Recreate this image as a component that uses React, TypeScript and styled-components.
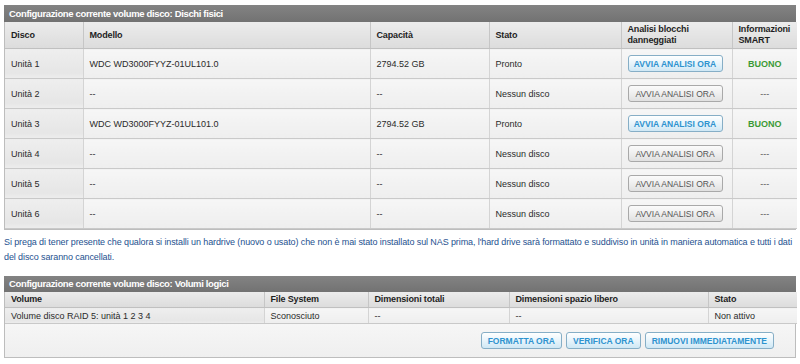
import styled, { createGlobalStyle, css } from "styled-components";

const Global = createGlobalStyle`
  html, body {
    margin: 0;
    padding: 0;
    background: #ffffff;
  }
  body {
    font-family: "Liberation Sans", Arial, sans-serif;
    font-size: 9px;
    color: #222;
  }
`;

const Page = styled.div`
  padding: 5px 4px 0 4px;
  width: 792px;
`;

const Panel = styled.div`
  border: 1px solid #bdbdbd;
  border-top: none;
`;

const PanelTitle = styled.div<{ $h: number }>`
  height: ${(p) => p.$h}px;
  line-height: ${(p) => p.$h}px;
  background: linear-gradient(#838383, #727272);
  color: #fff;
  font-weight: bold;
  font-size: 9.5px;
  letter-spacing: -0.35px;
  padding-left: 5px;
  margin: 0 -1px;
`;

const Table = styled.table`
  width: 100%;
  border-collapse: collapse;
  table-layout: fixed;
`;

const HeadCell = styled.th<{ $h: number }>`
  height: ${(p) => p.$h}px;
  padding: 0 4px 0 6px;
  text-align: left;
  font-weight: bold;
  font-size: 9px;
  letter-spacing: -0.15px;
  color: #1e1e1e;
  line-height: 11px;
  background: linear-gradient(#ececec, #dcdcdc);
  border-left: 1px solid #c6c6c6;
  border-bottom: 1px solid #c0c0c0;
  &:first-child {
    border-left: none;
  }
`;

const Cell = styled.td<{ $h: number; $center?: boolean }>`
  height: ${(p) => p.$h}px;
  padding: 0 6px;
  color: #2a2a2a;
  font-size: 9px;
  text-align: ${(p) => (p.$center ? "center" : "left")};
  background: linear-gradient(#f6f6f6, #eeeeee);
  border-left: 1px solid #d4d4d4;
  border-bottom: 1px solid #c9c9c9;
  white-space: nowrap;
  &:first-child {
    border-left: none;
    background: linear-gradient(#eeeeee, #e6e6e6 80%, #ededed);
  }
`;

const Good = styled.span`
  color: #3c9a36;
  font-weight: bold;
`;

const Dash = styled.span`
  color: #555;
`;

const ActionButton = styled.button<{ $active?: boolean }>`
  font-family: "Liberation Sans", Arial, sans-serif;
  font-size: 8.5px;
  font-weight: ${(p) => (p.$active ? "bold" : "normal")};
  height: 17px;
  padding: 0 6px;
  border-radius: 3px;
  cursor: pointer;
  white-space: nowrap;
  ${(p) =>
    p.$active
      ? css`
          color: #2e93cf;
          border: 1px solid #86aec6;
          background: linear-gradient(#ffffff, #e8f4fb 50%, #cfe8f5);
        `
      : css`
          color: #555;
          border: 1px solid #a9a9a9;
          background: linear-gradient(#fbfbfb, #ececec 60%, #e0e0e0);
        `}
`;

const ScanButton = styled(ActionButton)`
  width: 95px;
  padding: 0;
`;

const Notice = styled.p`
  margin: 5px 0 0 0;
  color: #25518f;
  line-height: 15px;
  font-size: 9px;
  letter-spacing: -0.1px;
`;

const LogicalPanel = styled(Panel)`
  margin-top: 11px;
`;

const ButtonBar = styled.div`
  height: 33px;
  display: flex;
  justify-content: flex-end;
  align-items: center;
  gap: 4px;
  padding-right: 21px;
  background: linear-gradient(#f6f6f6, #efefef);
`;

type Disk = {
  name: string;
  model: string;
  capacity: string;
  state: string;
  present: boolean;
};

const disks: Disk[] = [
  { name: "Unità 1", model: "WDC WD3000FYYZ-01UL101.0", capacity: "2794.52 GB", state: "Pronto", present: true },
  { name: "Unità 2", model: "--", capacity: "--", state: "Nessun disco", present: false },
  { name: "Unità 3", model: "WDC WD3000FYYZ-01UL101.0", capacity: "2794.52 GB", state: "Pronto", present: true },
  { name: "Unità 4", model: "--", capacity: "--", state: "Nessun disco", present: false },
  { name: "Unità 5", model: "--", capacity: "--", state: "Nessun disco", present: false },
  { name: "Unità 6", model: "--", capacity: "--", state: "Nessun disco", present: false },
];

const diskCols = [78, 287, 119, 132, 111, 65];
const volCols = [259, 104, 141, 199, 89];

const App = () => {
  return (
    <Page>
      <Global />
      <Panel>
        <PanelTitle $h={17}>Configurazione corrente volume disco: Dischi fisici</PanelTitle>
        <Table>
          <colgroup>
            {diskCols.map((w, i) => (
              <col key={i} style={{ width: w }} />
            ))}
          </colgroup>
          <thead>
            <tr>
              <HeadCell $h={26}>Disco</HeadCell>
              <HeadCell $h={26}>Modello</HeadCell>
              <HeadCell $h={26}>Capacità</HeadCell>
              <HeadCell $h={26}>Stato</HeadCell>
              <HeadCell $h={26}>
                Analisi blocchi
                <br />
                danneggiati
              </HeadCell>
              <HeadCell $h={26}>
                Informazioni
                <br />
                SMART
              </HeadCell>
            </tr>
          </thead>
          <tbody>
            {disks.map((d) => (
              <tr key={d.name}>
                <Cell $h={29}>{d.name}</Cell>
                <Cell $h={29}>{d.model}</Cell>
                <Cell $h={29}>{d.capacity}</Cell>
                <Cell $h={29}>{d.state}</Cell>
                <Cell $h={29}>
                  <ScanButton $active={d.present}>AVVIA ANALISI ORA</ScanButton>
                </Cell>
                <Cell $h={29} $center>
                  {d.present ? <Good>BUONO</Good> : <Dash>---</Dash>}
                </Cell>
              </tr>
            ))}
          </tbody>
        </Table>
      </Panel>

      <Notice>
        Si prega di tener presente che qualora si installi un hardrive (nuovo o usato) che non è mai stato installato sul NAS
        prima, l'hard drive sarà formattato e suddiviso in unità in maniera automatica e tutti i dati del disco saranno
        cancellati.
      </Notice>

      <LogicalPanel>
        <PanelTitle $h={16}>Configurazione corrente volume disco: Volumi logici</PanelTitle>
        <Table>
          <colgroup>
            {volCols.map((w, i) => (
              <col key={i} style={{ width: w }} />
            ))}
          </colgroup>
          <thead>
            <tr>
              <HeadCell $h={15}>Volume</HeadCell>
              <HeadCell $h={15}>File System</HeadCell>
              <HeadCell $h={15}>Dimensioni totali</HeadCell>
              <HeadCell $h={15}>Dimensioni spazio libero</HeadCell>
              <HeadCell $h={15}>Stato</HeadCell>
            </tr>
          </thead>
          <tbody>
            <tr>
              <Cell $h={15}>Volume disco RAID 5: unità 1 2 3 4</Cell>
              <Cell $h={15}>Sconosciuto</Cell>
              <Cell $h={15}>--</Cell>
              <Cell $h={15}>--</Cell>
              <Cell $h={15}>Non attivo</Cell>
            </tr>
          </tbody>
        </Table>
        <ButtonBar>
          <ActionButton $active>FORMATTA ORA</ActionButton>
          <ActionButton $active>VERIFICA ORA</ActionButton>
          <ActionButton $active>RIMUOVI IMMEDIATAMENTE</ActionButton>
        </ButtonBar>
      </LogicalPanel>
    </Page>
  );
};

export default App;
